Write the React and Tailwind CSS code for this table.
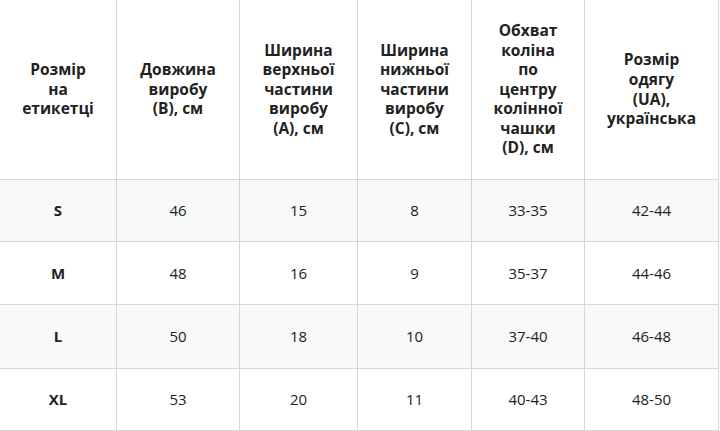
export default function App() {
  const cols = ["w-[117px]", "w-[123px]", "w-[118px]", "w-[114px]", "w-[113px]", "w-[134px]"];
  const headers = [
    ["Розмір", "на", "етикетці"],
    ["Довжина", "виробу", "(B), см"],
    ["Ширина", "верхньої", "частини", "виробу", "(A), см"],
    ["Ширина", "нижньої", "частини", "виробу", "(C), см"],
    ["Обхват", "коліна", "по", "центру", "колінної", "чашки", "(D), см"],
    ["Розмір", "одягу", "(UA),", "українська"],
  ];
  const rows = [
    { h: "h-[62px]", bg: "bg-[#f9f9f9]", d: ["S", "46", "15", "8", "33-35", "42-44"] },
    { h: "h-[63px]", bg: "bg-white", d: ["M", "48", "16", "9", "35-37", "44-46"] },
    { h: "h-[64px]", bg: "bg-[#f9f9f9]", d: ["L", "50", "18", "10", "37-40", "46-48"] },
    { h: "h-[62px]", bg: "bg-white", d: ["XL", "53", "20", "11", "40-43", "48-50"] },
  ];
  return (
    <div className="w-[720px] h-[431px] bg-white overflow-hidden text-[#222] font-['Open_Sans',sans-serif]">
      <div className="flex h-[180px]">
        {headers.map((lines, i) => (
          <div
            key={i}
            className={`${cols[i]} h-full border-r border-b border-[#d6d6d6] flex flex-col items-center justify-center text-center font-bold text-[15.5px] leading-[19.6px]`}
          >
            {lines.map((l, j) => (
              <span key={j}>{l}</span>
            ))}
          </div>
        ))}
      </div>
      {rows.map((r, ri) => (
        <div key={ri} className={`flex ${r.h} ${r.bg}`}>
          {r.d.map((v, i) => (
            <div
              key={i}
              className={`${cols[i]} h-full border-r border-b border-[#d6d6d6] flex items-center justify-center text-[15px] ${i === 0 ? "font-bold" : ""}`}
            >
              {v}
            </div>
          ))}
        </div>
      ))}
    </div>
  );
}
